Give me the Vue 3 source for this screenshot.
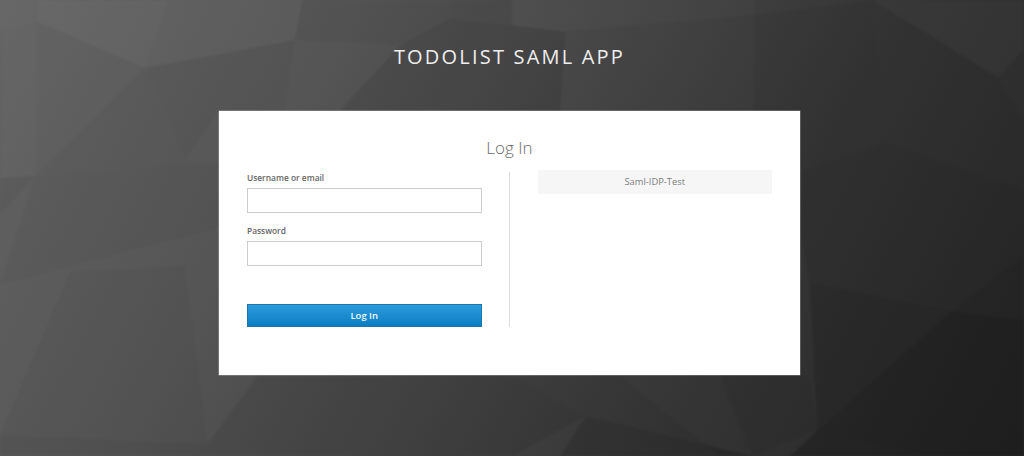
<script setup>
const facets = [
  { p: '38,0 168,0 145,68 38,22', f: '#fff', o: 0.05 },
  { p: '168,0 302,0 295,40 145,68', f: '#fff', o: 0.035 },
  { p: '0,0 38,0 38,22 0,32', f: '#fff', o: 0.04 },
  { p: '0,32 38,22 36,176 0,178', f: '#fff', o: 0.025 },
  { p: '38,22 145,68 35,176', f: '#fff', o: 0.012 },
  { p: '145,68 185,162 35,176', f: '#000', o: 0.02 },
  { p: '145,68 295,40 285,110 219,111 185,162', f: '#000', o: 0.03 },
  { p: '302,0 450,0 450,18 400,45 295,40', f: '#000', o: 0.035 },
  { p: '450,0 512,0 512,25 450,18', f: '#000', o: 0.05 },
  { p: '450,18 565,32 560,111 340,111 400,45', f: '#000', o: 0.1 },
  { p: '512,0 754,0 754,15 565,32 512,25', f: '#fff', o: 0.025 },
  { p: '754,15 873,0 888,143 800,170 754,111', f: '#000', o: 0.05 },
  { p: '873,0 1024,0 1024,50 998,78', f: '#fff', o: 0.025 },
  { p: '873,0 998,78 1024,120 1024,190 888,143', f: '#000', o: 0.04 },
  { p: '888,143 1024,190 1024,255 952,311 810,283 801,230 801,170', f: '#000', o: 0.1 },
  { p: '810,283 952,311 817,431', f: '#000', o: 0.17 },
  { p: '952,311 1024,320 1024,456 925,456 817,431', f: '#000', o: 0.27 },
  { p: '1024,255 1024,320 952,311', f: '#000', o: 0.16 },
  { p: '0,178 35,176 0,215', f: '#000', o: 0.05 },
  { p: '35,176 185,162 219,165 219,228 0,285', f: '#000', o: 0.03 },
  { p: '70,272 185,266 208,443 0,435', f: '#000', o: 0.035 },
  { p: '0,435 208,443 195,456 0,456', f: '#000', o: 0.08 },
  { p: '208,443 258,376 512,376 586,416 512,456 195,456', f: '#000', o: 0.09 },
  { p: '586,416 752,456 560,456', f: '#000', o: 0.16 },
  { p: '512,376 620,376 720,456 752,456 586,416', f: '#000', o: 0.06 },
  { p: '720,376 810,376 817,431 752,456', f: '#000', o: 0.06 },
  { p: '817,431 925,456 790,456', f: '#000', o: 0.25 }
]
</script>

<template>
  <div class="page">
    <svg class="facets" viewBox="0 0 1024 456" preserveAspectRatio="none" aria-hidden="true">
      <polygon v-for="(t, i) in facets" :key="i" :points="t.p" :fill="t.f" :fill-opacity="t.o" />
    </svg>
    <h1 class="title">TODOLIST SAML APP</h1>
    <main class="card">
      <h2 class="heading">Log In</h2>
      <div class="body">
        <form class="form" @submit.prevent>
          <div class="field">
            <label class="label" for="username">Username or email</label>
            <input id="username" class="input" type="text" />
          </div>
          <div class="field">
            <label class="label" for="password">Password</label>
            <input id="password" class="input" type="password" />
          </div>
          <button class="submit" type="submit">Log In</button>
        </form>
        <div class="divider"></div>
        <aside class="providers">
          <a class="provider" href="#" @click.prevent>Saml-IDP-Test</a>
        </aside>
      </div>
    </main>
  </div>
</template>

<style>
html, body { margin: 0; overflow: hidden; }
</style>

<style scoped>
.page {
  position: relative;
  width: 1024px;
  height: 456px;
  overflow: hidden;
  box-sizing: border-box;
  padding-top: 42px;
  background: linear-gradient(118deg, #636363 0%, #555 28%, #454545 50%, #343434 72%, #262626 100%);
  font-family: "Open Sans", "Liberation Sans", sans-serif;
}
.facets {
  position: absolute;
  inset: 0;
  width: 100%;
  height: 100%;
  filter: blur(1px);
  opacity: 0.8;
}
.title {
  position: relative;
  width: 1019px;
  margin: 0 0 39px;
  height: 30px;
  line-height: 30px;
  text-align: center;
  font-size: 20px;
  font-weight: 400;
  letter-spacing: 2.2px;
  color: #eeeeee;
}
.card {
  position: relative;
  box-sizing: border-box;
  width: 581px;
  height: 264px;
  margin-left: 219px;
  padding: 25px 28px 0;
  background: #fff;
  box-shadow: 0 0 0 0.5px rgba(255, 255, 255, 0.4);
}
.heading {
  margin: 0;
  height: 24px;
  line-height: 24px;
  text-align: center;
  font-size: 17px;
  font-weight: 300;
  color: #6b6b6b;
}
.body {
  display: flex;
  margin-top: 10px;
}
.form {
  display: flex;
  flex-direction: column;
  width: 235px;
}
.field + .field {
  margin-top: 10px;
}
.label {
  display: block;
  height: 14px;
  line-height: 16px;
  margin-bottom: 4px;
  font-size: 8.4px;
  font-weight: 600;
  color: #666;
}
.input {
  display: block;
  box-sizing: border-box;
  width: 100%;
  height: 25px;
  margin: 0;
  padding: 0 6px;
  border: 1px solid #cdcdcd;
  border-radius: 0;
  background: #fff;
  outline: none;
}
.submit {
  box-sizing: border-box;
  width: 100%;
  height: 23px;
  margin-top: 38px;
  padding: 0;
  border: 1px solid #1a76ad;
  background: linear-gradient(#2d9cdd, #0a7dc2);
  color: #f4fbff;
  font-family: inherit;
  font-size: 9.5px;
  font-weight: 600;
  line-height: 19px;
}
.divider {
  width: 1px;
  height: 155px;
  margin: 2px 28px 0 27px;
  background: #dcdcdc;
}
.providers {
  width: 235px;
}
.provider {
  display: block;
  height: 24px;
  line-height: 24px;
  text-align: center;
  font-size: 9.4px;
  color: #7d7d7d;
  background: #f6f6f7;
  text-decoration: none;
}
</style>
